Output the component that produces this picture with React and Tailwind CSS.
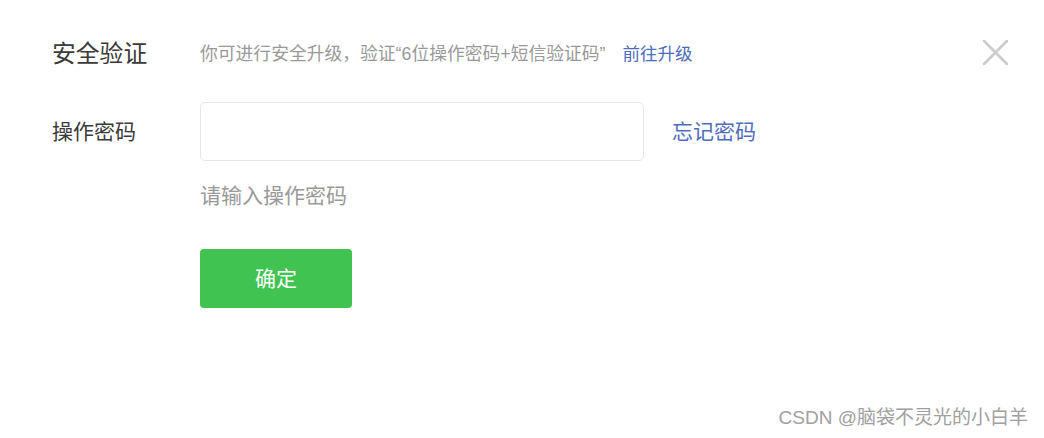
const App = () => {
  return (
    <div className="relative w-[1044px] h-[438px] bg-white font-['Liberation_Sans','Noto_Sans_CJK_SC',sans-serif] overflow-hidden">
      <button className="absolute right-[35px] top-[39px] w-[27px] h-[27px] text-[#cccccc]">
        <svg viewBox="0 0 26 26" className="w-full h-full" fill="none" stroke="currentColor" strokeWidth="2.6" strokeLinecap="round">
          <path d="M2 2 L24 24 M24 2 L2 24" />
        </svg>
      </button>

      <div className="flex flex-col pl-[52px] pt-[39px]">
        <div className="flex items-center h-[30px]">
          <div className="w-[148px] text-[23.8px] text-[#3a3a3a]">安全验证</div>
          <div className="text-[17.8px] text-[#999999]">你可进行安全升级，验证“6位操作密码+短信验证码”</div>
          <a className="ml-[17px] text-[17.5px] text-[#4e6dbd] cursor-pointer">前往升级</a>
        </div>

        <div className="flex items-center mt-[33px]">
          <div className="w-[148px] text-[21px] text-[#3a3a3a]">操作密码</div>
          <input
            type="password"
            className="w-[444px] h-[59px] border border-[#e6e6e6] rounded-[5px] px-3 outline-none"
          />
          <a className="ml-[28px] text-[21px] text-[#4e6dbd] cursor-pointer">忘记密码</a>
        </div>

        <div className="ml-[148px] mt-[21px] text-[21px] leading-[28px] text-[#999999]">请输入操作密码</div>

        <button className="ml-[148px] mt-[39px] w-[152px] h-[59px] rounded-[4px] bg-[#40c350] text-white text-[21px]">
          确定
        </button>
      </div>

      <div className="absolute right-[16px] bottom-[6px] text-[19px] text-[#a0a0a0]">CSDN @脑袋不灵光的小白羊</div>
    </div>
  );
};

export default App;
